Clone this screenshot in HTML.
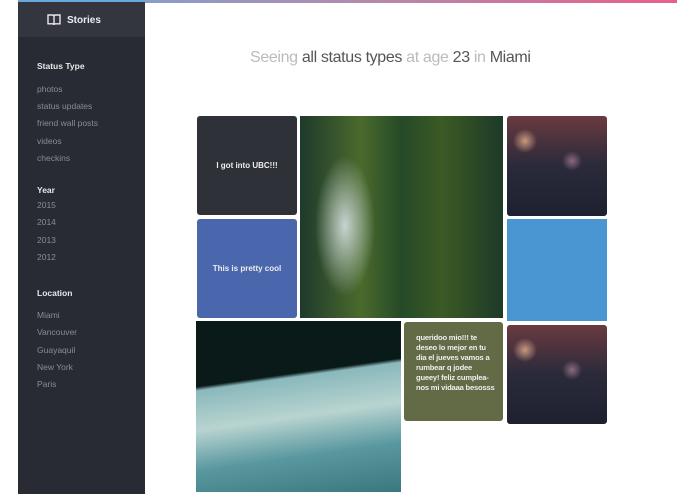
<!DOCTYPE html>
<html><head><meta charset="utf-8"><style>
*{margin:0;padding:0;box-sizing:border-box}
body{width:695px;height:494px;overflow:hidden;background:#fff;font-family:"Liberation Sans",sans-serif;position:relative}
.a{position:absolute}
.bar{left:18px;top:0;width:659px;height:3px;background:linear-gradient(90deg,#6fa8d8,#b08cb0,#e8608a)}
.sb{left:18px;top:0;width:127px;height:494px;background:#282b33}
.sh{left:18px;top:0;width:127px;height:37px;background:#33363f;border-top:2px solid #6aa8dc}
.h{left:37px;font-size:8.5px;font-weight:bold;color:#e8e8ea}
.i{left:37px;font-size:8.5px;color:#8a8c93}
.t{border-radius:3px;color:#eee;font-size:8px;font-weight:bold;display:flex;align-items:center;justify-content:center;overflow:hidden}
</style></head><body>
<div class="a bar"></div>
<div class="a sb"></div>
<div class="a sh"></div>
<svg class="a" style="left:47px;top:14px" width="14" height="12" viewBox="0 0 14 12"><path d="M1 1h4.5c1 0 1.5.6 1.5 1.5V11c0-.8-.6-1.2-1.5-1.2H1zM13 1H8.5C7.5 1 7 1.6 7 2.5V11c0-.8.6-1.2 1.5-1.2H13z" fill="none" stroke="#e8e8ea" stroke-width="1.4"/></svg>
<div class="a" style="left:67px;top:15px;font-size:10px;font-weight:bold;color:#eceef0">Stories</div>
<div class="a h" style="top:61px">Status Type</div>
<div class="a i" style="top:84px">photos</div>
<div class="a i" style="top:101px">status updates</div>
<div class="a i" style="top:118px">friend wall posts</div>
<div class="a i" style="top:136px">videos</div>
<div class="a i" style="top:153px">checkins</div>
<div class="a h" style="top:185px">Year</div>
<div class="a i" style="top:200px">2015</div>
<div class="a i" style="top:217px">2014</div>
<div class="a i" style="top:235px">2013</div>
<div class="a i" style="top:252px">2012</div>
<div class="a h" style="top:288px">Location</div>
<div class="a i" style="top:310px">Miami</div>
<div class="a i" style="top:327px">Vancouver</div>
<div class="a i" style="top:345px">Guayaquil</div>
<div class="a i" style="top:362px">New York</div>
<div class="a i" style="top:379px">Paris</div>
<div class="a" style="left:250px;top:49px;font-size:16px;letter-spacing:-0.35px;color:#bbb;white-space:nowrap">Seeing <span style="color:#555">all status types</span> at age <span style="color:#555">23</span> in <span style="color:#555">Miami</span></div>
<div class="a t" style="left:197px;top:116px;width:100px;height:99px;background:#2f3139">I got into UBC!!!</div>
<div class="a t" style="left:197px;top:219px;width:100px;height:99px;background:#4a66ad">This is pretty cool</div>
<div class="a" style="left:300px;top:116px;width:203px;height:202px;background:radial-gradient(ellipse 30px 70px at 45px 110px,#c8d4d0,transparent),linear-gradient(90deg,#1e3a2c,#4a6a2c 30%,#254a28 50%,#3b5a24 70%,#1d3a28)"></div>
<div class="a" style="left:507px;top:116px;width:100px;height:100px;border-radius:3px;background:radial-gradient(circle 12px at 18px 25px,#c89a80,transparent),radial-gradient(circle 10px at 65px 45px,#8a6a80,transparent),linear-gradient(180deg,#6a3a40,#2a2a3a 50%,#1e2030)"></div>
<div class="a" style="left:507px;top:219px;width:100px;height:102px;background:#4a96d2"></div>
<div class="a" style="left:196px;top:321px;width:205px;height:171px;background:linear-gradient(172deg,#0a1a18 33%,#8ab8bc 35%,#b8d4d0 55%,#5a98a0 75%,#3a7880)"></div>
<div class="a" style="left:404px;top:322px;width:99px;height:99px;border-radius:3px;background:#636b46;color:#eee;font-size:7.6px;font-weight:bold;line-height:10px;padding:11px 8px 0 12px;letter-spacing:-0.2px">queridoo mio!!! te deseo lo mejor en tu dia el jueves vamos a rumbear q jodee gueey!  feliz cumplea-nos mi vidaaa besosss</div>
<div class="a" style="left:507px;top:325px;width:100px;height:99px;border-radius:3px;background:radial-gradient(circle 12px at 18px 25px,#c89a80,transparent),radial-gradient(circle 10px at 65px 45px,#8a6a80,transparent),linear-gradient(180deg,#6a3a40,#2a2a3a 50%,#1e2030)"></div>
</body></html>
